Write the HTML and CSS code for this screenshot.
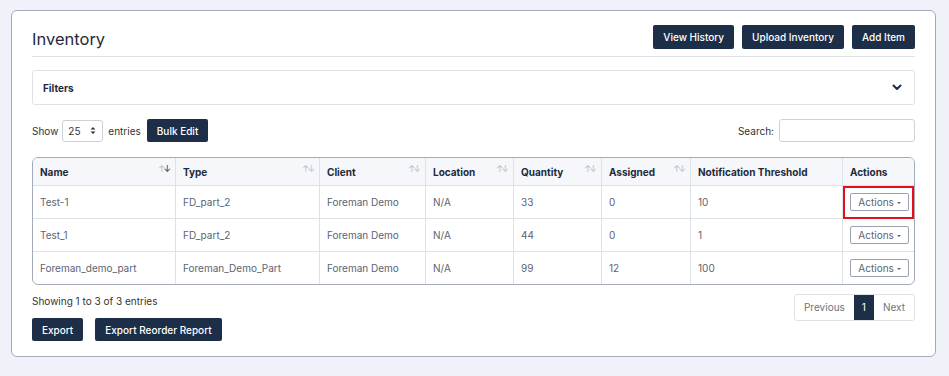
FILE: index.html
```
<!DOCTYPE html>
<html lang="en">
<head>
    <meta charset="UTF-8">
    <meta name="viewport" content="width=device-width, initial-scale=1.0">
    <title>Inventory</title>
    <link rel="stylesheet" href="styles.css">
</head>
<body>

    <div class="card">
        <!-- header -->
        <div class="card-header">
            <h1>Inventory</h1>
            <div class="header-buttons">
                <button type="button" class="btn">View History</button>
                <button type="button" class="btn">Upload Inventory</button>
                <button type="button" class="btn">Add Item</button>
            </div>
        </div>

        <!-- filters -->
        <div class="filters">
            <span>Filters</span>
            <svg class="chevron" width="10" height="7" viewBox="0 0 10 7">
                <path d="M1.5 1.5 L5 5 L8.5 1.5" fill="none" stroke="#1c2e48" stroke-width="2" stroke-linecap="round" stroke-linejoin="round"/>
            </svg>
        </div>

        <!-- controls -->
        <div class="controls">
            <div class="length">
                <span>Show</span>
                <div class="select">
                    <span>25</span>
                    <svg width="6" height="9" viewBox="0 0 6 9">
                        <path d="M0.5 3.5 L3 1 L5.5 3.5 Z M0.5 5.5 L3 8 L5.5 5.5 Z" fill="#333"/>
                    </svg>
                </div>
                <span>entries</span>
                <button type="button" class="btn">Bulk Edit</button>
            </div>
            <div class="search">
                <label for="search">Search:</label>
                <input type="text" id="search">
            </div>
        </div>

        <!-- table -->
        <div class="table-wrap">
            <table>
                <thead>
                    <tr>
                        <th class="col-name">Name<span class="sort">↑<b>↓</b></span></th>
                        <th class="col-type">Type<span class="sort">↑↓</span></th>
                        <th class="col-client">Client<span class="sort">↑↓</span></th>
                        <th class="col-location">Location<span class="sort">↑↓</span></th>
                        <th class="col-qty">Quantity<span class="sort">↑↓</span></th>
                        <th class="col-assigned">Assigned<span class="sort">↑↓</span></th>
                        <th class="col-threshold">Notification Threshold</th>
                        <th class="col-actions">Actions</th>
                    </tr>
                </thead>
                <tbody id="inventory-body">
                    <!-- rows -->
                </tbody>
            </table>
        </div>

        <!-- footer -->
        <div class="card-footer">
            <div class="footer-left">
                <div class="info">Showing 1 to 3 of 3 entries</div>
                <div class="export-buttons">
                    <button type="button" class="btn">Export</button>
                    <button type="button" class="btn">Export Reorder Report</button>
                </div>
            </div>
            <div class="pagination">
                <span class="page">Previous</span>
                <span class="page current">1</span>
                <span class="page">Next</span>
            </div>
        </div>
    </div>

    <script>
        // inventory rows
        const items = [
            { name: 'Test-1', type: 'FD_part_2', client: 'Foreman Demo', location: 'N/A', quantity: 33, assigned: 0, threshold: 10 },
            { name: 'Test_1', type: 'FD_part_2', client: 'Foreman Demo', location: 'N/A', quantity: 44, assigned: 0, threshold: 1 },
            { name: 'Foreman_demo_part', type: 'Foreman_Demo_Part', client: 'Foreman Demo', location: 'N/A', quantity: 99, assigned: 12, threshold: 100 }
        ];

        const tableBody = document.getElementById("inventory-body");
        items.forEach((item, i) => {
            const row = document.createElement("tr");
            row.innerHTML = `
                <td>${item.name}</td>
                <td>${item.type}</td>
                <td>${item.client}</td>
                <td>${item.location}</td>
                <td>${item.quantity}</td>
                <td>${item.assigned}</td>
                <td>${item.threshold}</td>
                <td class="${i === 0 ? 'highlight' : ''}"><button type="button" class="btn-actions">Actions <span class="caret"></span></button></td>
            `;
            tableBody.appendChild(row);
        });
    </script>

</body>
</html>
```

FILE: styles.css
```
body {
    font-family: 'Inter', 'Liberation Sans', sans-serif;
    background-color: #eff2f9;
    margin: 0;
    padding: 10px 13px 20px 11px;
    color: #1f2a3a;
    font-size: 10px;
}

.card {
    background-color: white;
    border: 1px solid #a3abba;
    border-radius: 6px;
    padding: 14px 20px 15px 20px;
    height: 347px;
    box-sizing: border-box;
}

.btn {
    font-family: inherit;
    background-color: #1c2e48;
    color: white;
    border: none;
    border-radius: 2px;
    font-size: 10px;
    font-weight: 500;
    height: 24px;
    padding: 0 10px;
    cursor: pointer;
}

.card-header {
    display: flex;
    justify-content: space-between;
    align-items: center;
    padding-bottom: 7px;
    border-bottom: 1px solid #dde2e8;
}

.card-header h1 {
    margin: 0;
    padding-top: 4px;
    font-size: 16.5px;
    font-weight: 400;
    color: #1f2a3a;
}

.header-buttons {
    display: flex;
    gap: 8px;
}

.filters {
    margin-top: 13px;
    height: 35px;
    box-sizing: border-box;
    border: 1px solid #dde2e8;
    border-radius: 3px;
    display: flex;
    justify-content: space-between;
    align-items: center;
    padding: 0 12px 0 10px;
    font-weight: 700;
    font-size: 10px;
}

.controls {
    margin-top: 14px;
    display: flex;
    justify-content: space-between;
    align-items: center;
}

.length {
    display: flex;
    align-items: center;
    gap: 4px;
    color: #333;
}

.select {
    width: 41px;
    height: 22px;
    box-sizing: border-box;
    border: 1px solid #ccd2da;
    border-radius: 3px;
    display: flex;
    justify-content: space-between;
    align-items: center;
    padding: 0 6px 0 5px;
    margin-right: 1px;
}

.length .btn {
    margin-left: 2px;
    height: 23px;
}

.search {
    display: flex;
    align-items: center;
    gap: 5px;
    color: #333;
}

.search input {
    width: 136px;
    height: 23px;
    box-sizing: border-box;
    border: 1px solid #ccd2da;
    border-radius: 3px;
}

.table-wrap {
    margin-top: 15px;
    border: 1px solid #a3abba;
    border-radius: 6px;
    overflow: hidden;
}

table {
    width: 100%;
    border-collapse: collapse;
    table-layout: fixed;
}

th, td {
    text-align: left;
    padding: 0 7px;
    border-left: 1px solid #dde2e8;
    border-top: 1px solid #dde2e8;
}

th:first-child, td:first-child {
    border-left: none;
}

th {
    position: relative;
    height: 27px;
    background-color: #f5f7fa;
    font-weight: 700;
    font-size: 10px;
    border-top: none;
    color: #1f2a3a;
}

td {
    height: 32px;
    font-size: 10px;
    color: #5b6472;
}

.sort {
    position: absolute;
    right: 6px;
    top: 5px;
    font-size: 9px;
    font-weight: 400;
    color: #b8bec8;
    letter-spacing: -2px;
}

.sort b {
    font-weight: 400;
    color: #1f2a3a;
}

.col-name { width: 128px; }
.col-type { width: 129px; }
.col-client { width: 91px; }
.col-location { width: 73px; }
.col-qty { width: 73px; }
.col-assigned { width: 74px; }
.col-threshold { width: 137px; }

td.highlight {
    outline: 2px solid #e3101b;
    outline-offset: -2px;
}

.btn-actions {
    font-family: inherit;
    background: white;
    border: 1px solid #9aa2b0;
    border-radius: 2px;
    color: #5b6472;
    font-size: 10px;
    height: 18px;
    width: 59px;
    padding: 0;
}

.caret {
    display: inline-block;
    width: 0;
    height: 0;
    border-left: 2.5px solid transparent;
    border-right: 2.5px solid transparent;
    border-top: 2.5px solid #5b6472;
    vertical-align: middle;
}

.card-footer {
    display: flex;
    justify-content: space-between;
    align-items: flex-start;
}

.info {
    margin-top: 10px;
    line-height: 12px;
    color: #333;
}

.export-buttons {
    margin-top: 11px;
    display: flex;
    gap: 12px;
}

.export-buttons .btn {
    height: 23px;
}

.pagination {
    margin-top: 9px;
    display: flex;
    border: 1px solid #dde2e8;
    border-radius: 3px;
    overflow: hidden;
}

.page {
    height: 25px;
    line-height: 25px;
    padding: 0 9px;
    color: #6c757d;
}

.page.current {
    background-color: #1c2e48;
    color: white;
    padding: 0 8px;
}
```
